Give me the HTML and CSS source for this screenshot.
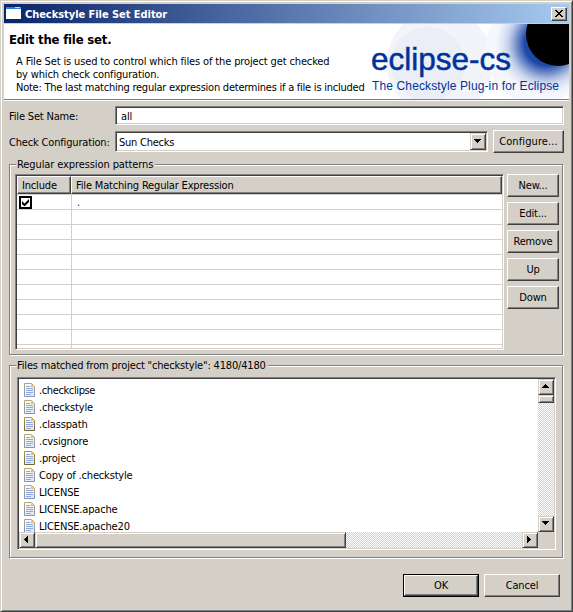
FILE: index.html
```html
<!DOCTYPE html>
<html lang="en">
<head>
<meta charset="utf-8">
<title>Checkstyle File Set Editor</title>
<link rel="stylesheet" href="styles.css">
</head>
<body>
<svg class="defs" width="0" height="0">
  <defs>
    <linearGradient id="edge" x1="0" y1="0" x2="0" y2="1"><stop offset="0" stop-color="#b8a468"/><stop offset="1" stop-color="#7f93c4"/></linearGradient>
    <linearGradient id="edge-gold" x1="0" y1="0" x2="0" y2="1"><stop offset="0" stop-color="#b8923c"/><stop offset="1" stop-color="#6e6438"/></linearGradient>
    <linearGradient id="paper" x1="0" y1="0" x2="1" y2="1"><stop offset="0" stop-color="#fff"/><stop offset="1" stop-color="#d8e6f6"/></linearGradient>
    <g id="sheet">
      <path d="M.5 .5H7.5L10.5 3.5V13.500H.5Z" fill="url(#paper)"/>
      <path d="M7 1V4H10Z" fill="#e8b860"/>
      <path d="M2 3.500H6M2 5.500H9M2 7.500H9M2 9.500H9M2 11.500H7" stroke="#8fa6d6"/>
    </g>
    <symbol id="doc" viewBox="0 0 11 14"><use href="#sheet"/><path d="M.5 .5H7.5L10.5 3.5V13.500H.5Z" fill="none" stroke="url(#edge)"/></symbol>
    <symbol id="doc-gold" viewBox="0 0 11 14"><use href="#sheet"/><path d="M.5 .5H7.5L10.5 3.5V13.500H.5Z" fill="none" stroke="url(#edge-gold)"/></symbol>
  </defs>
</svg>
<div class="window">
  <div class="titlebar">
    <svg class="app-icon" width="15" height="12"><rect width="15" height="12" fill="#fff"/><rect width="15" height="2" fill="#2f80d8"/><path d="M9 .5h5" stroke="#b8dcff"/></svg>
    <span class="title">Checkstyle File Set Editor</span>
    <button class="btn close"><svg width="8" height="7"><path d="M0 0h2v1h1v1h2v-1h1v-1h2v1h-1v1h-1v1h-1v1h1v1h1v1h1v1h-2v-1h-1v-1h-2v1h-1v1h-2v-1h1v-1h1v-1h1v-1h-1v-1h-1v-1h-1z"/></svg></button>
  </div>
  <header class="header">
    <div class="intro">
      <h1>Edit the file set.</h1>
      <p><span class="l1">A File Set is used to control which files of the project get checked</span><br><span class="l2">by which check configuration.</span><br><span class="l3">Note: The last matching regular expression determines if a file is included</span></p>
    </div>
    <svg class="logo" width="198" height="75">
      <defs><radialGradient id="glow"><stop offset=".42" stop-color="#1c48a8"/><stop offset=".58" stop-color="#3c63b6" stop-opacity=".7"/><stop offset=".76" stop-color="#6f8ccb" stop-opacity=".32"/><stop offset="1" stop-color="#a9b9df" stop-opacity="0"/></radialGradient></defs>
      <circle cx="69" cy="39" r="53" fill="#f3f4fa"/>
      <circle cx="57" cy="40" r="37" fill="#ebeef7"/>
      <circle cx="167" cy="27" r="53" fill="#f5f7fc"/>
      <circle cx="175" cy="20" r="51" fill="url(#glow)"/>
      <circle cx="187" cy="10" r="32"/>
      <text class="brand" x="0" y="45.500" textLength="140" lengthAdjust="spacingAndGlyphs">eclipse-cs</text>
      <text class="tagline" x="1" y="66" textLength="187">The Checkstyle Plug-in for Eclipse</text>
    </svg>
  </header>
  <main class="content">
    <div class="form">
      <label class="name-label">File Set Name:</label>
      <div class="sunken text-input">all</div>
      <label class="config-label">Check Configuration:</label>
      <div class="config-row">
        <div class="sunken combo"><span>Sun Checks</span><button class="btn arrow"><svg width="7" height="4"><path d="M0 0h7v1h-1v1h-1v1h-1v1h-1v-1h-1v-1h-1v-1h-1z"/></svg></button></div>
        <button class="btn configure">Configure...</button>
      </div>
    </div>
    <fieldset class="group patterns">
      <legend class="g1">Regular expression patterns</legend>
      <div class="sunken table">
        <div class="thead"><div class="th include">Include</div><div class="th regex">File Matching Regular Expression</div></div>
        <div class="tbody">
          <div class="row"><div class="cell"><svg class="check" width="13" height="13"><rect x="1" y="1" width="11" height="11" fill="#fff" stroke="#000" stroke-width="2"/><path d="M3 5v3l2 2h1l4-4v-3l-4.500 4.500z"/></svg></div><div class="cell dot">.</div></div>
          <div class="row"><div class="cell"></div></div><div class="row"><div class="cell"></div></div><div class="row"><div class="cell"></div></div><div class="row"><div class="cell"></div></div><div class="row"><div class="cell"></div></div><div class="row"><div class="cell"></div></div><div class="row"><div class="cell"></div></div><div class="row"><div class="cell"></div></div><div class="row"><div class="cell"></div></div><div class="row"><div class="cell"></div></div>
        </div>
      </div>
      <div class="side">
        <button class="btn">New...</button><button class="btn">Edit...</button><button class="btn">Remove</button><button class="btn">Up</button><button class="btn">Down</button>
      </div>
    </fieldset>
    <fieldset class="group files">
      <legend class="g2">Files matched from project "checkstyle": 4180/4180</legend>
      <div class="sunken list">
        <ul>
          <li><svg><use href="#doc"/></svg><span class="tight">.checkclipse</span></li>
          <li><svg><use href="#doc"/></svg><span>.checkstyle</span></li>
          <li><svg><use href="#doc-gold"/></svg><span>.classpath</span></li>
          <li><svg><use href="#doc"/></svg><span>.cvsignore</span></li>
          <li><svg><use href="#doc-gold"/></svg><span>.project</span></li>
          <li><svg><use href="#doc"/></svg><span>Copy of .checkstyle</span></li>
          <li><svg><use href="#doc"/></svg><span>LICENSE</span></li>
          <li><svg><use href="#doc"/></svg><span>LICENSE.apache</span></li>
          <li><svg><use href="#doc"/></svg><span>LICENSE.apache20</span></li>
        </ul>
        <div class="scroll vertical">
          <button class="btn arrow"><svg width="7" height="4"><path d="M3 0h1v1h1v1h1v1h1v1h-7v-1h1v-1h1v-1h1z"/></svg></button>
          <div class="btn thumb"></div>
          <button class="btn arrow end"><svg width="7" height="4"><path d="M0 0h7v1h-1v1h-1v1h-1v1h-1v-1h-1v-1h-1v-1h-1z"/></svg></button>
        </div>
        <div class="scroll horizontal">
          <button class="btn arrow"><svg width="4" height="7"><path d="M4 0v7h-1v-1h-1v-1h-1v-1h-1v-1h1v-1h1v-1h1v-1z"/></svg></button>
          <div class="btn thumb"></div>
          <button class="btn arrow end"><svg width="4" height="7"><path d="M0 0v7h1v-1h1v-1h1v-1h1v-1h-1v-1h-1v-1h-1v-1z"/></svg></button>
        </div>
      </div>
    </fieldset>
    <div class="actions"><div class="default"><button class="btn">OK</button></div><button class="btn">Cancel</button></div>
  </main>
</div>
</body>
</html>
```

FILE: styles.css
```css
* { box-sizing: border-box; }
body { margin: 0; width: 573px; height: 612px; overflow: hidden; background: #d4d0c8; color: #000; font: 11px/13px "DejaVu Sans Condensed", "DejaVu Sans", sans-serif; font-stretch: condensed; letter-spacing: -0.17px; }
.defs { position: absolute; }
svg { display: block; flex: none; }
.window { height: 612px; padding: 2px; border: 1px solid; border-color: #d4d0c8 #404040 #404040 #d4d0c8; box-shadow: inset 1px 1px #fff, inset -1px -1px #808080; display: flex; flex-direction: column; }
.titlebar { margin: 1px 1px 0; height: 19px; flex: none; display: flex; align-items: center; padding: 0 2px; background: linear-gradient(90deg, #0a246a, #a6caf0); color: #fff; font-weight: bold; }
.app-icon { margin: -1px 4px 0 0; }
.title { flex: 1; padding-top: 1px; white-space: nowrap; letter-spacing: -0.05px; }
.btn { display: flex; align-items: center; justify-content: center; height: 23px; padding: 0 0 1px; background: #d4d0c8; border: 1px solid; border-color: #fff #404040 #404040 #fff; box-shadow: inset -1px -1px #808080; font: inherit; letter-spacing: inherit; color: #000; white-space: nowrap; flex: none; }
.btn svg { shape-rendering: crispEdges; }
.close { width: 16px; height: 14px; padding: 0 0 1px; }
.header { margin: 1px 1px 0; height: 77px; flex: none; display: flex; justify-content: space-between; background: #fff; border-bottom: 1px solid #fff; box-shadow: inset 0 -1px #808080; white-space: nowrap; }
.intro { padding: 8px 0 0 5px; width: 367px; }
h1 { margin: 0; font-size: 13px; line-height: 16px; letter-spacing: -0.2px; }
p { margin: 7px 0 0 7px; }
.l1 { letter-spacing: -0.135px; }
.l3 { letter-spacing: -0.24px; }
.brand { font: 32px "Liberation Sans", Arial, sans-serif; fill: #039; stroke: #039; stroke-width: .5px; letter-spacing: 0; }
.tagline { font: 12px "Liberation Sans", Arial, sans-serif; fill: #039; letter-spacing: 0; }
.content { padding: 5px 6px 0; }
.form { display: grid; grid-template-columns: 106px 449px; row-gap: 5px; align-items: center; }
.form label { padding-top: 1px; white-space: nowrap; }
.sunken { background: #fff; border: 1px solid; border-color: #808080 #fff #fff #808080; box-shadow: inset 1px 1px #404040, inset -1px -1px #d4d0c8; }
.text-input { height: 19px; padding: 3px 5px; }
.config-row { display: flex; align-items: center; gap: 5px; }
.combo { display: flex; justify-content: space-between; align-items: center; width: 373px; height: 21px; padding: 1px 1px 1px 3px; }
.combo span { padding-top: 1px; letter-spacing: -0.25px; }
.arrow { width: 16px; height: 16px; padding: 0 1px 2px 0; border-color: #d4d0c8 #404040 #404040 #d4d0c8; box-shadow: inset 1px 1px #fff, inset -1px -1px #808080; }
.combo .arrow { height: 17px; padding-bottom: 1px; }
.horizontal .arrow { padding: 0 2px 1px 0; }
.configure { width: 71px; letter-spacing: .1px; }
.group { position: relative; margin: 0; padding: 0; border: 1px solid #808080; box-shadow: 1px 1px #fff, inset 1px 1px #fff; width: 554px; min-width: 0; }
legend { position: absolute; left: 6px; top: -7px; padding: 0 2px 0 1px; background: #d4d0c8; white-space: nowrap; }
.g1 { letter-spacing: -0.1px; }
.patterns { height: 191px; margin-top: 11px; padding: 9px 3px 0 5px; display: flex; gap: 3px; }
.table { width: 489px; height: 176px; padding: 1px; flex: none; }
.thead { display: flex; height: 18px; }
.th { height: 18px; padding: 2px 4px; background: #d4d0c8; border: 1px solid; border-color: #fff #404040 #404040 #fff; box-shadow: inset -1px -1px #808080; }
.include { width: 54px; }
.regex { flex: 1; }
.tbody { height: 154px; overflow: hidden; border-top: 1px solid #d4d0c8; }
.row { display: flex; height: 15px; border-bottom: 1px solid #d4d0c8; }
.cell:first-child { width: 55px; border-right: 1px solid #d4d0c8; padding: 1px 2px; }
.dot { padding: 1px 0 0 5px; color: #208; }
.side { display: flex; flex-direction: column; gap: 5px; }
.side .btn { width: 52px; }
.files { height: 193px; margin-top: 10px; padding: 11px 7px 0; }
.list { width: 539px; height: 173px; padding: 1px; display: grid; grid-template-columns: 519px 16px; grid-template-rows: 153px 16px; background: #fff; }
ul { margin: 0; padding: 2px 0 0 5px; list-style: none; overflow: hidden; }
li { display: flex; align-items: center; gap: 4px; height: 17px; }
li svg { width: 11px; height: 14px; }
li span { padding-top: 2px; }
.tight { letter-spacing: -0.38px; }
.scroll { display: flex; background: repeating-conic-gradient(#fff 0 25%, #d4d0c8 0 50%) 0 0 / 2px 2px; }
.vertical { flex-direction: column; }
.thumb { border-color: #d4d0c8 #404040 #404040 #d4d0c8; box-shadow: inset 1px 1px #fff, inset -1px -1px #808080; }
.vertical .thumb { height: 8px; width: 16px; }
.horizontal .thumb { height: 16px; width: 311px; }
.vertical .end { margin-top: auto; }
.horizontal .end { margin-left: auto; }
.horizontal { box-shadow: 16px 0 #d4d0c8; }
.actions { display: flex; justify-content: flex-end; gap: 5px; margin: 16px 4px 0 0; }
.actions .btn { width: 76px; }
.default { border: 1px solid #000; }
.default .btn { width: 74px; height: 21px; }
```
